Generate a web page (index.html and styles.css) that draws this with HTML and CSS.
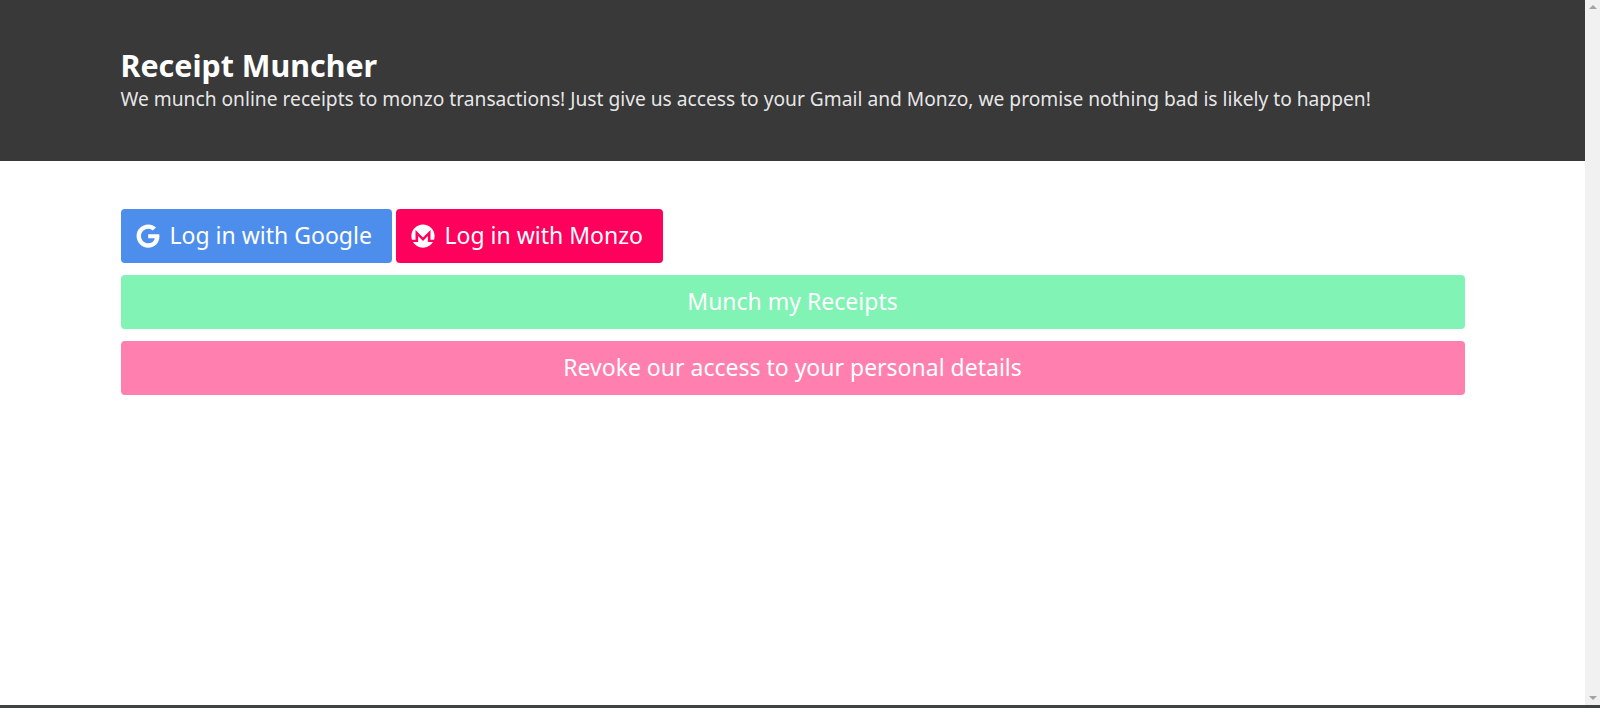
FILE: index.html
```html
<!DOCTYPE html>
<html lang="en">
<head>
    <meta charset="UTF-8">
    <meta name="viewport" content="width=device-width, initial-scale=1.0">
    <title>Receipt Muncher</title>
    <link rel="stylesheet" href="styles.css">
</head>
<body>
    <div class="window">
        <div class="page">
            <section class="hero">
                <div class="container">
                    <h1 class="title">Receipt Muncher</h1>
                    <h2 class="subtitle">We munch online receipts to monzo transactions! Just give us access to your Gmail and Monzo, we promise nothing bad is likely to happen!</h2>
                </div>
            </section>
            <section class="container actions">
                <div class="login-row">
                    <a class="button button-login button-google" href="#">
                        <svg class="icon" viewBox="0 0 488 512"><path d="M488 261.8C488 403.3 391.1 504 248 504 110.8 504 0 393.2 0 256S110.8 8 248 8c66.8 0 123 24.5 166.3 64.9l-67.5 64.9C258.5 52.6 94.3 116.6 94.3 256c0 86.5 69.1 156.6 153.7 156.6 98.2 0 135-70.4 140.8-106.9H248v-85.3h236.1c2.3 12.7 3.9 24.9 3.9 41.4z"/></svg>
                        <span>Log in with Google</span>
                    </a>
                    <a class="button button-login button-monzo" href="#">
                        <svg class="icon" viewBox="0 0 496 512"><path d="M352 384h108.4C417 455.9 338.1 504 248 504S79 455.9 35.6 384H144V256.2L248 361l104-105v128zM88 336V128l159.6 159.4L408 128v208h74.8c8.5-25.1 13.2-52 13.2-80C496 119 385 8 248 8S0 119 0 256c0 28 4.6 54.9 13.2 80H88z"/></svg>
                        <span>Log in with Monzo</span>
                    </a>
                </div>
                <a class="button button-munch" href="#">Munch my Receipts</a>
                <a class="button button-revoke" href="#">Revoke our access to your personal details</a>
            </section>
        </div>
        <div class="scrollbar">
            <span class="arrow arrow-up"></span>
            <span class="arrow arrow-down"></span>
        </div>
    </div>
    <div class="taskbar"></div>
</body>
</html>
```

FILE: styles.css
```css
html, body {
    height: 100%;
}
body {
    margin: 0;
    display: flex;
    flex-direction: column;
    overflow: hidden;
    font-family: "Noto Sans", "Open Sans", sans-serif;
    background-color: #fff;
}
.window {
    flex: 1;
    display: flex;
    min-height: 0;
}
.page {
    flex: 1;
    min-width: 0;
}
.container {
    width: 1344px;
    margin: 0 auto;
}
.hero {
    height: 161px;
    display: flex;
    align-items: center;
    background-color: #393939;
    color: #fff;
}
.title {
    margin: 0 0 4px;
    font-size: 30.4px;
    line-height: 32px;
    font-weight: 700;
    color: #fff;
}
.subtitle {
    margin: 0;
    font-size: 19.2px;
    line-height: 25px;
    font-weight: 400;
    color: rgba(255, 255, 255, 0.9);
}
.actions {
    display: flex;
    flex-direction: column;
    gap: 12px;
    padding-top: 48px;
}
.login-row {
    display: flex;
    gap: 4px;
}
.button {
    height: 52px;
    padding-bottom: 2px;
    display: flex;
    align-items: center;
    justify-content: center;
    border-radius: 4px;
    font-size: 23px;
    color: #fff;
    text-decoration: none;
}
.button-login {
    justify-content: flex-start;
    padding-left: 15px;
}
.icon {
    width: 24px;
    height: 24px;
    fill: #fff;
    margin: 2px 10px 0 0;
}
.button-google {
    width: 256px;
    background-color: #4d8eec;
}
.button-monzo {
    width: 252px;
    background-color: #ff005c;
}
.button-munch {
    background-color: #80f3b5;
}
.button-revoke {
    background-color: #ff80ae;
}
.scrollbar {
    width: 15px;
    display: flex;
    flex-direction: column;
    justify-content: space-between;
    align-items: center;
    padding: 5px 0;
    background-color: #f1f1f1;
}
.arrow {
    width: 0;
    height: 0;
    border-left: 4px solid transparent;
    border-right: 4px solid transparent;
}
.arrow-up {
    border-bottom: 4px solid #a3a3a3;
}
.arrow-down {
    border-top: 4px solid #a3a3a3;
}
.taskbar {
    height: 3px;
    background-color: #3c4340;
}
```
